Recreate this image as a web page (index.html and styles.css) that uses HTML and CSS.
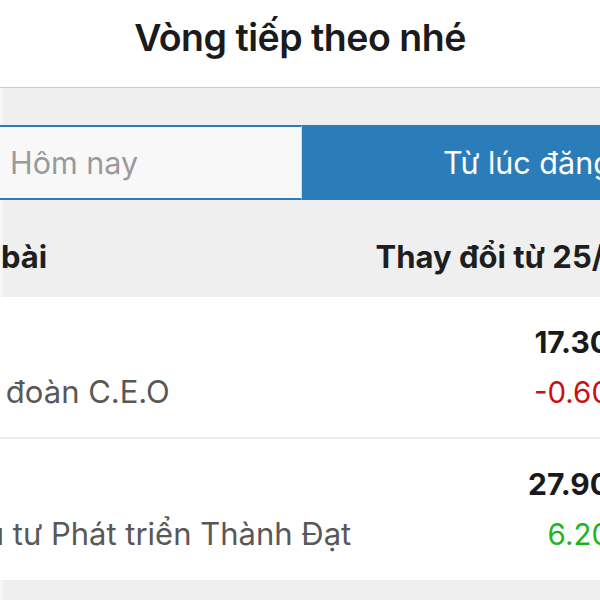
FILE: index.html
```html
<!DOCTYPE html>
<html lang="vi">
<head>
<meta charset="utf-8">
<title>Vòng tiếp theo nhé</title>
<link rel="stylesheet" href="styles.css">
</head>
<body>
<header class="topbar">
  <h1 class="title">Vòng tiếp theo nhé</h1>
</header>
<main class="content">
  <div class="segments">
    <div class="seg seg-off">Hôm nay</div>
    <div class="seg seg-on">Từ lúc đăng ký</div>
  </div>
  <div class="thead">
    <span class="th-left">bài</span>
    <span class="th-right">Thay đổi từ 25/10</span>
  </div>
  <div class="rows">
    <div class="row">
      <div class="name-col">
        <div class="line"></div>
        <div class="line name"><span class="name-text">Tập đoàn C.E.O</span></div>
      </div>
      <div class="val-col">
        <div class="line price">17.30</div>
        <div class="line change down">-0.60</div>
      </div>
    </div>
    <div class="row">
      <div class="name-col">
        <div class="line"></div>
        <div class="line name"><span class="name-text name-text-alt">Đầu tư Phát triển Thành Đạt</span></div>
      </div>
      <div class="val-col">
        <div class="line price">27.90</div>
        <div class="line change up">6.20</div>
      </div>
    </div>
  </div>
</main>
</body>
</html>
```

FILE: styles.css
```css
html, body {
  margin: 0;
  padding: 0;
}
body {
  width: 600px;
  height: 600px;
  overflow: hidden;
  font-family: Inter, "Noto Sans", "Liberation Sans", sans-serif;
  background: #efefef;
}
.topbar {
  background: #ffffff;
  border-bottom: 1px solid #c8c8c8;
  display: flex;
  align-items: center;
  justify-content: center;
  padding-bottom: 12px;
  box-sizing: content-box;
  height: 75px;
}
.title {
  margin: 0;
  font-size: 37.5px;
  font-weight: 600;
  color: #1b1b1b;
  letter-spacing: -0.5px;
}
.content {
  background: linear-gradient(to right, #f7f7f7 3px, #efefef 3px);
  padding-top: 37px;
  min-height: 600px;
}
.segments {
  display: flex;
  height: 75px;
}
.seg {
  display: flex;
  align-items: center;
  font-size: 30.5px;
  white-space: nowrap;
  overflow: hidden;
  box-sizing: border-box;
}
.seg-off {
  width: 302px;
  flex: none;
  background: #f8f8f8;
  border-top: 2px solid #2b7bb8;
  border-bottom: 2px solid #2b7bb8;
  border-right: 1px solid #d8d8d8;
  color: #9a9a9a;
  padding-left: 10px;
}
.seg-on {
  flex: 1;
  background: #2b7db9;
  color: #ffffff;
  padding-left: 141px;
}
.thead {
  height: 97px;
  box-sizing: border-box;
  padding-top: 15px;
  display: flex;
  align-items: center;
  font-size: 31px;
  font-weight: 700;
  color: #1e1e1e;
  white-space: nowrap;
}
.th-left {
  padding-left: 1px;
}
.th-right {
  margin-left: auto;
  margin-right: -38px;
}
.rows {
  background: #ffffff;
}
.row {
  display: flex;
  justify-content: space-between;
  padding: 20px 0 20px;
  border-bottom: 2px solid #ececec;
  height: 100px;
}
.row + .row {
  border-bottom: none;
  height: 101px;
}
.line {
  height: 50px;
  line-height: 50px;
  white-space: nowrap;
}
.name-col {
  min-width: 0;
}
.name {
  font-size: 31px;
  color: #585858;
}
.name-text {
  display: inline-block;
  margin-left: -57px;
}
.name-text-alt {
  margin-left: -54px;
}
.val-col {
  text-align: right;
  margin-right: -10px;
}
.price {
  font-size: 30px;
  font-weight: 700;
  color: #1a1a1a;
}
.change {
  font-size: 29.5px;
}
.down {
  color: #c81212;
}
.up {
  color: #1eb51e;
}
```
